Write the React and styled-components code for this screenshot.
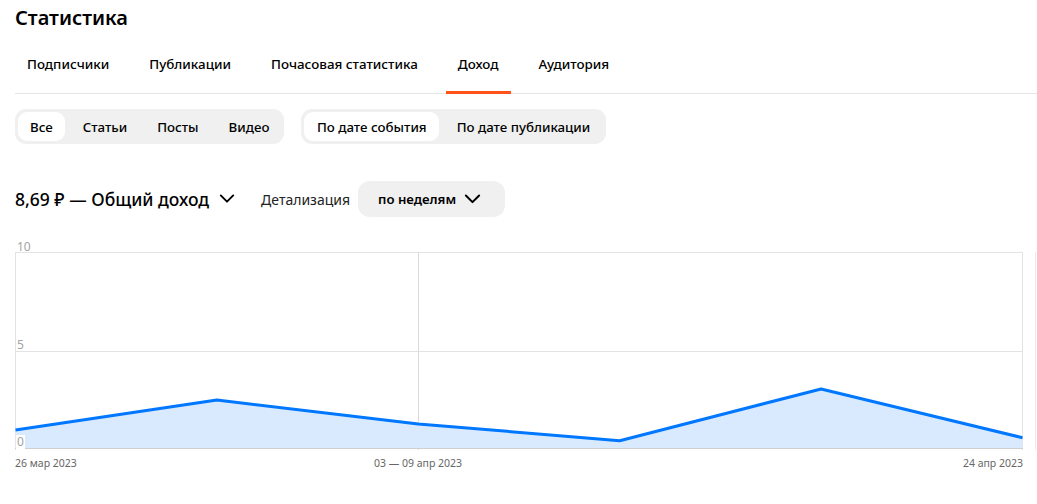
import styled, { createGlobalStyle } from 'styled-components';

const GlobalStyle = createGlobalStyle`
  html, body {
    margin: 0;
    padding: 0;
    background: #ffffff;
    font-family: "Noto Sans", "Open Sans", Arial, sans-serif;
    color: #000000;
  }
`;

const Page = styled.div`
  width: 1037px;
  height: 504px;
  overflow: hidden;
  padding-left: 15px;
  box-sizing: border-box;
`;

const Title = styled.h1`
  margin: 0;
  padding-top: 4px;
  font-size: 20px;
  line-height: 28px;
  font-weight: 600;
`;

const Tabs = styled.nav`
  display: flex;
  gap: 16px;
  margin-top: 9px;
  height: 52px;
  border-bottom: 1px solid #e6e6e6;
`;

const Tab = styled.div`
  display: flex;
  align-items: center;
  padding: 0 12px 4px;
  font-size: 13.4px;
  font-weight: 500;
  margin-bottom: -1px;
  border-bottom: 3px solid ${(p) => (p.$active ? '#ff5319' : 'transparent')};
  box-sizing: border-box;
`;

const FilterRow = styled.div`
  display: flex;
  gap: 17px;
  margin-top: 15px;
`;

const Segmented = styled.div`
  display: flex;
  gap: ${(p) => p.$gap}px;
  padding: 3px;
  height: 35px;
  box-sizing: border-box;
  background: #f0f0f0;
  border-radius: 11px;
`;

const Segment = styled.div`
  display: flex;
  align-items: center;
  padding: 0 ${(p) => p.$pad}px;
  font-size: 13.3px;
  font-weight: 500;
  border-radius: 9px;
  background: ${(p) => (p.$active ? '#ffffff' : 'transparent')};
`;

const IncomeRow = styled.div`
  display: flex;
  align-items: center;
  margin-top: 37px;
  height: 36px;
`;

const Total = styled.div`
  display: flex;
  align-items: center;
  gap: 10px;
  font-size: 17.5px;
  font-weight: 500;
`;

const DetailLabel = styled.span`
  margin-left: 26px;
  font-size: 14px;
  color: #222;
`;

const Dropdown = styled.div`
  display: flex;
  align-items: center;
  gap: 8px;
  margin-left: 8px;
  height: 36px;
  padding: 0 24px 0 20px;
  background: #f0f0f0;
  border-radius: 12px;
  font-size: 13.2px;
  font-weight: 600;
`;

const ChartRow = styled.div`
  display: flex;
  margin-top: 35px;
  gap: 12px;
`;

const Chart = styled.div`
  position: relative;
  width: 1008px;
  height: 198px;

  svg {
    display: block;
  }
`;

const SideEdge = styled.div`
  width: 1px;
  height: 198px;
  background: #ececec;
`;

const YLabel = styled.span`
  position: absolute;
  left: 1px;
  top: ${(p) => p.$top}px;
  padding: 0 1px;
  font-size: 12px;
  line-height: 14px;
  color: #a3a3a3;
  background: ${(p) => (p.$bg ? '#ffffff' : 'transparent')};
`;

const XAxis = styled.div`
  display: grid;
  grid-template-columns: 806px 202px;
  width: 1008px;
  margin-top: 6px;
  font-size: 10.5px;
  line-height: 14px;
  color: #666;
`;

const XLabel = styled.span`
  grid-row: 1;
  grid-column: ${(p) => p.$col};
  justify-self: ${(p) => p.$align};
`;

const Chevron = ({ size = 16 }) => (
  <svg width={size} height={size * 0.6} viewBox="0 0 16 10" fill="none">
    <path d="M1.5 1.5 8 8l6.5-6.5" stroke="#000" strokeWidth="2" strokeLinecap="round" strokeLinejoin="round" />
  </svg>
);

const data = [178, 148, 172, 188.7, 137, 185.7];

const RevenueChart = () => {
  const w = 1008;
  const h = 198;
  const step = (w - 1) / (data.length - 1);
  const pts = data.map((y, i) => `${(i * step + 0.5).toFixed(1)},${y}`).join(' ');
  const area = `0.5,${h - 1} ${pts} ${w - 0.5},${h - 1}`;
  return (
    <Chart>
      <svg width={w} height={h}>
        <line x1="0" y1="0.5" x2={w} y2="0.5" stroke="#e3e3e3" />
        <line x1="0" y1="99.5" x2={w} y2="99.5" stroke="#e3e3e3" />
        <line x1="0.5" y1="0" x2="0.5" y2={h} stroke="#e3e3e3" />
        <line x1={w - 0.5} y1="0" x2={w - 0.5} y2={h} stroke="#e3e3e3" />
        <line x1="403.5" y1="0" x2="403.5" y2={h} stroke="#dadada" />
        <polygon points={area} fill="#d9eaff" />
        <polyline points={pts} fill="none" stroke="#0077ff" strokeWidth="3" strokeLinejoin="round" />
        <line x1="0" y1={h - 1.5} x2={w} y2={h - 1.5} stroke="#cfcfcf" />
      </svg>
      <YLabel $top={-12}>10</YLabel>
      <YLabel $top={86}>5</YLabel>
      <YLabel $top={183} $bg>0</YLabel>
    </Chart>
  );
};

export default function App() {
  return (
    <Page>
      <GlobalStyle />
      <Title>Статистика</Title>
      <Tabs>
        <Tab>Подписчики</Tab>
        <Tab>Публикации</Tab>
        <Tab>Почасовая статистика</Tab>
        <Tab $active>Доход</Tab>
        <Tab>Аудитория</Tab>
      </Tabs>
      <FilterRow>
        <Segmented $gap={6}>
          <Segment $pad={12} $active>Все</Segment>
          <Segment $pad={12}>Статьи</Segment>
          <Segment $pad={12}>Посты</Segment>
          <Segment $pad={12}>Видео</Segment>
        </Segmented>
        <Segmented $gap={5}>
          <Segment $pad={12.5} $active>По дате события</Segment>
          <Segment $pad={12.5}>По дате публикации</Segment>
        </Segmented>
      </FilterRow>
      <IncomeRow>
        <Total>
          8,69 ₽ — Общий доход
          <Chevron />
        </Total>
        <DetailLabel>Детализация</DetailLabel>
        <Dropdown>
          по неделям
          <Chevron size={17} />
        </Dropdown>
      </IncomeRow>
      <ChartRow>
        <RevenueChart />
        <SideEdge />
      </ChartRow>
      <XAxis>
        <XLabel $col={1} $align="start">26 мар 2023</XLabel>
        <XLabel $col={1} $align="center">03 — 09 апр 2023</XLabel>
        <XLabel $col={2} $align="end">24 апр 2023</XLabel>
      </XAxis>
    </Page>
  );
}
